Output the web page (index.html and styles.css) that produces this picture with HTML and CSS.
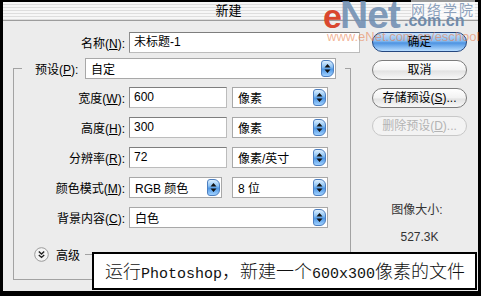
FILE: index.html
```html
<!DOCTYPE html>
<html>
<head>
  <meta charset="UTF-8">
  <title>新建</title>
  <link rel="stylesheet" href="styles.css">
</head>
<body>
  <div class="frame">
    <div class="window">
      <div class="titlebar">新建</div>
      <div class="dialog">
        <div class="form">
          <div class="row">
            <span class="lbl name-lbl">名称(<u>N</u>):</span>
            <div class="field w-name">未标题-1</div>
          </div>

          <div class="group">
            <div class="legend">
              <span class="legend-lbl">预设(<u>P</u>):</span>
              <div class="select w-preset">自定<span class="spin"><svg width="7" height="11" viewBox="0 0 7 11"><path d="M3.5 1L6.5 4.5H0.5Z M3.5 10L6.5 6.5H0.5Z" fill="#111"/></svg></span></div>
            </div>

            <div class="row first">
              <span class="lbl">宽度(<u>W</u>):</span>
              <div class="field w-num">600</div>
              <div class="select w-unit">像素<span class="spin"><svg width="7" height="11" viewBox="0 0 7 11"><path d="M3.5 1L6.5 4.5H0.5Z M3.5 10L6.5 6.5H0.5Z" fill="#111"/></svg></span></div>
            </div>
            <div class="row">
              <span class="lbl">高度(<u>H</u>):</span>
              <div class="field w-num">300</div>
              <div class="select w-unit">像素<span class="spin"><svg width="7" height="11" viewBox="0 0 7 11"><path d="M3.5 1L6.5 4.5H0.5Z M3.5 10L6.5 6.5H0.5Z" fill="#111"/></svg></span></div>
            </div>
            <div class="row">
              <span class="lbl">分辨率(<u>R</u>):</span>
              <div class="field w-num">72</div>
              <div class="select w-unit">像素/英寸<span class="spin"><svg width="7" height="11" viewBox="0 0 7 11"><path d="M3.5 1L6.5 4.5H0.5Z M3.5 10L6.5 6.5H0.5Z" fill="#111"/></svg></span></div>
            </div>
            <div class="row">
              <span class="lbl">颜色模式(<u>M</u>):</span>
              <div class="select w-mode">RGB 颜色<span class="spin"><svg width="7" height="11" viewBox="0 0 7 11"><path d="M3.5 1L6.5 4.5H0.5Z M3.5 10L6.5 6.5H0.5Z" fill="#111"/></svg></span></div>
              <div class="select w-unit">8 位<span class="spin"><svg width="7" height="11" viewBox="0 0 7 11"><path d="M3.5 1L6.5 4.5H0.5Z M3.5 10L6.5 6.5H0.5Z" fill="#111"/></svg></span></div>
            </div>
            <div class="row">
              <span class="lbl">背景内容(<u>C</u>):</span>
              <div class="select w-bg">白色<span class="spin"><svg width="7" height="11" viewBox="0 0 7 11"><path d="M3.5 1L6.5 4.5H0.5Z M3.5 10L6.5 6.5H0.5Z" fill="#111"/></svg></span></div>
            </div>

            <div class="advanced">
              <span class="disclose"><svg width="15" height="15" viewBox="0 0 15 15"><circle cx="7.5" cy="7.5" r="6.8" fill="#f4f4f4" stroke="#9a9a9a"/><path d="M4.8 4.6L7.5 7.1L10.2 4.6 M4.8 7.9L7.5 10.4L10.2 7.9" fill="none" stroke="#222" stroke-width="1.4"/></svg></span>
              <span class="adv-lbl">高级</span>
              <span class="adv-line"></span>
            </div>
          </div>
        </div>

        <div class="side">
          <div class="btn default">确定</div>
          <div class="btn">取消</div>
          <div class="btn">存储预设(<u>S</u>)...</div>
          <div class="btn disabled">删除预设(<u>D</u>)...</div>
          <div class="size-lbl">图像大小:</div>
          <div class="size-val">527.3K</div>
        </div>
      </div>

      <div class="caption">运行<span class="lat">Photoshop</span>，新建一个<span class="lat">600x300</span>像素的文件</div>
    </div>

    <div class="wm">
      <span class="wm-e">e</span><span class="wm-net">Net</span>
      <span class="wm-cn">网络学院</span>
      <span class="wm-com">.com.cn</span>
      <span class="wm-url">www.eNet.com.cn/eschool</span>
    </div>
  </div>
</body>
</html>
```

FILE: styles.css
```css
* { box-sizing: border-box; }
body { margin:0;background:#000;font-family:"Liberation Sans","Noto Sans CJK SC",sans-serif;font-size:12px;color:#000; }
u { text-decoration:underline;text-underline-offset:1px; }

.frame { position:relative;width:481px;height:296px;background:#000;padding:2px 3px 5px 3px; }
.window { position:relative;height:100%;background:#ececec;overflow:hidden; }

.titlebar { height:19px;line-height:18px;text-align:center;padding-right:24px;font-size:13px;border-bottom:1px solid #9c9c9c;
  background:repeating-linear-gradient(#f7f7f7 0 2px,#dedede 2px 3px); }

.dialog { display:flex; }
.form { width:360px;padding:11px 0 0 10px; }
.row { display:flex;align-items:center;height:21px; }
.row + .row { margin-top:9px; }
.row.first { margin-top:8px; }
.lbl { width:111px;margin-right:4px;text-align:right;white-space:nowrap; }
.name-lbl { width:112px; }

.field { height:21px;line-height:19px;background:#fff;padding-left:4px;border:1px solid #bcbcbc;border-top-color:#7e7e7e;border-left-color:#8e8e8e; }
.select { display:flex;align-items:center;height:21px;background:#fff;padding-left:5px;border:1px solid #a8a8a8;white-space:nowrap; }
.spin { display:flex;align-items:center;justify-content:center;width:13px;height:17px;margin-left:auto;margin-right:1px;border:1px solid #4d7fc0;border-radius:3px 6px 6px 3px;
  background:linear-gradient(#dcefff,#8cc2f4 40%,#4f98e6 55%,#9fd0ff); }

.w-name { width:231px; }
.w-num { width:98px;margin-right:5px; }
.w-unit { width:96px; }
.w-mode { width:93px;margin-right:10px; }
.w-bg { width:199px; }
.w-preset { width:251px; }

.group { width:338px;margin-top:15px;border:1px solid #a2a2a2;padding-bottom:17px; }
.legend { display:flex;align-items:center;height:21px;margin:-11px 5px 0 8px;padding:0 9px 0 13px;background:#ececec; }
.legend-lbl { width:50px;white-space:nowrap; }

.advanced { display:flex;align-items:center;height:16px;margin-top:18px;padding-left:20px; }
.disclose { display:flex;width:15px;height:15px;margin-right:7px; }
.adv-lbl { margin-right:5px; }
.adv-line { flex:1;height:1px;background:#a2a2a2;margin-right:10px; }

.side { width:115px;padding:11px 0 0 9px; }
.btn { width:95px;height:20px;line-height:18px;text-align:center;border:1px solid #7c7c7c;border-radius:10px;
  background:linear-gradient(#ffffff,#f2f2f2 50%,#e2e2e2 55%,#f8f8f8); }
.btn + .btn { margin-top:8px; }
.btn.default { border-color:#25477e;background:linear-gradient(#c9e2fb,#86bbf0 45%,#4d93e2 55%,#b6dcff); }
.btn.disabled { color:#b4b4b4;border-color:#c8c8c8;background:#f3f3f3; }
.size-lbl { width:90px;margin-top:66px;text-align:center;line-height:16px;color:#333; }
.size-val { width:95px;margin-top:11px;text-align:center;line-height:16px;color:#333; }

.caption { position:absolute;left:89px;top:250px;width:385px;height:38px;background:#fff;border:2px solid #000;padding-left:11px;
  font-family:"Noto Sans CJK SC",sans-serif;font-size:18px;font-weight:300;line-height:33px;color:#111;white-space:nowrap; }
.caption .lat { font-family:"Liberation Mono",monospace;font-size:15px; }

.wm { position:absolute;top:0;right:0;width:160px;height:46px;pointer-events:none; }
.wm-e { position:absolute;left:2px;top:-3px;line-height:normal;font:bold 34px "Liberation Sans",sans-serif;color:#d9472f; }
.wm-net { position:absolute;left:19px;top:-7px;line-height:normal;font:bold 39px "Liberation Sans",sans-serif;letter-spacing:-1px;color:rgba(112,142,178,0.9); }
.wm-cn { position:absolute;left:90px;top:-1px;font-size:14px;letter-spacing:2px;color:#8ea2bc;background:rgba(255,255,255,0.6); }
.wm-com { position:absolute;left:83px;top:12px;font:bold 16px "Liberation Sans",sans-serif;color:#6f8bab; }
.wm-url { position:absolute;left:6px;top:29px;font-size:13px;color:rgba(232,118,64,0.55); }
```
